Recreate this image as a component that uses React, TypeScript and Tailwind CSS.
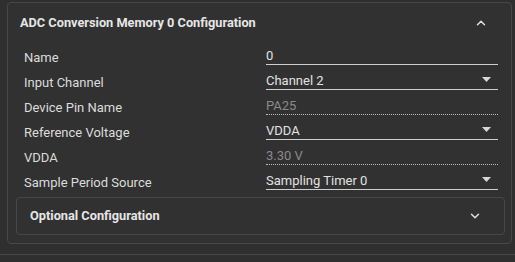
import { ChevronDown, ChevronUp } from 'lucide-react';

type Row = {
  label: string;
  value: string;
  kind: 'input' | 'select' | 'readonly';
};

const rows: Row[] = [
  { label: 'Name', value: '0', kind: 'input' },
  { label: 'Input Channel', value: 'Channel 2', kind: 'select' },
  { label: 'Device Pin Name', value: 'PA25', kind: 'readonly' },
  { label: 'Reference Voltage', value: 'VDDA', kind: 'select' },
  { label: 'VDDA', value: '3.30 V', kind: 'readonly' },
  { label: 'Sample Period Source', value: 'Sampling Timer 0', kind: 'select' },
];

const Caret = () => (
  <svg width="9" height="5" viewBox="0 0 9 5" className="mr-[7px]">
    <path d="M0 0h9L4.5 5z" fill="#d8d8d8" />
  </svg>
);

const FieldRow = ({ row }: { row: Row }) => {
  const readonly = row.kind === 'readonly';
  return (
    <div className="flex h-[25px] items-start">
      <div className="w-[258px] pl-[16px] pt-[5px] text-[13px] leading-[16px] text-[#dcdcdc]">{row.label}</div>
      <div
        className={`flex h-[20px] w-[232px] items-center justify-between ${
          readonly ? 'border-b border-dotted border-[#bdbdbd]' : 'border-b border-[#cfcfcf]'
        }`}
      >
        <span className={`pt-[3px] text-[13px] leading-[16px] ${readonly ? 'text-[#8a8a8a]' : 'text-[#e2e2e2]'}`}>
          {row.value}
        </span>
        {row.kind === 'select' && <Caret />}
      </div>
    </div>
  );
};

export default function App() {
  return (
    <div className="h-[262px] w-[515px] bg-[#2f2f2f] pt-[2px] font-['Roboto',sans-serif]">
      <div className="ml-[7px] w-[505px] rounded-[4px] border border-[#474747] bg-[#313131] pb-[8px]">
        <div className="flex h-[40px] items-center justify-between pl-[12px] pr-[23px]">
          <h1 className="text-[12.75px] font-bold text-[#e6e6e6]">ADC Conversion Memory 0 Configuration</h1>
          <ChevronUp className="h-[14px] w-[14px] text-[#e0e0e0]" strokeWidth={2.5} />
        </div>
        <div className="pt-[2px]">
          {rows.map((row) => (
            <FieldRow key={row.label} row={row} />
          ))}
        </div>
        <div className="ml-[8px] mr-[6px] mt-[2px] flex h-[38px] items-center justify-between rounded-[4px] border border-[#474747] pl-[13px] pr-[22px]">
          <span className="text-[12.75px] font-bold text-[#e6e6e6]">Optional Configuration</span>
          <ChevronDown className="h-[14px] w-[14px] text-[#e0e0e0]" strokeWidth={2.5} />
        </div>
      </div>
      <div className="mt-[10px] h-px w-full bg-[#474747]" />
    </div>
  );
}
